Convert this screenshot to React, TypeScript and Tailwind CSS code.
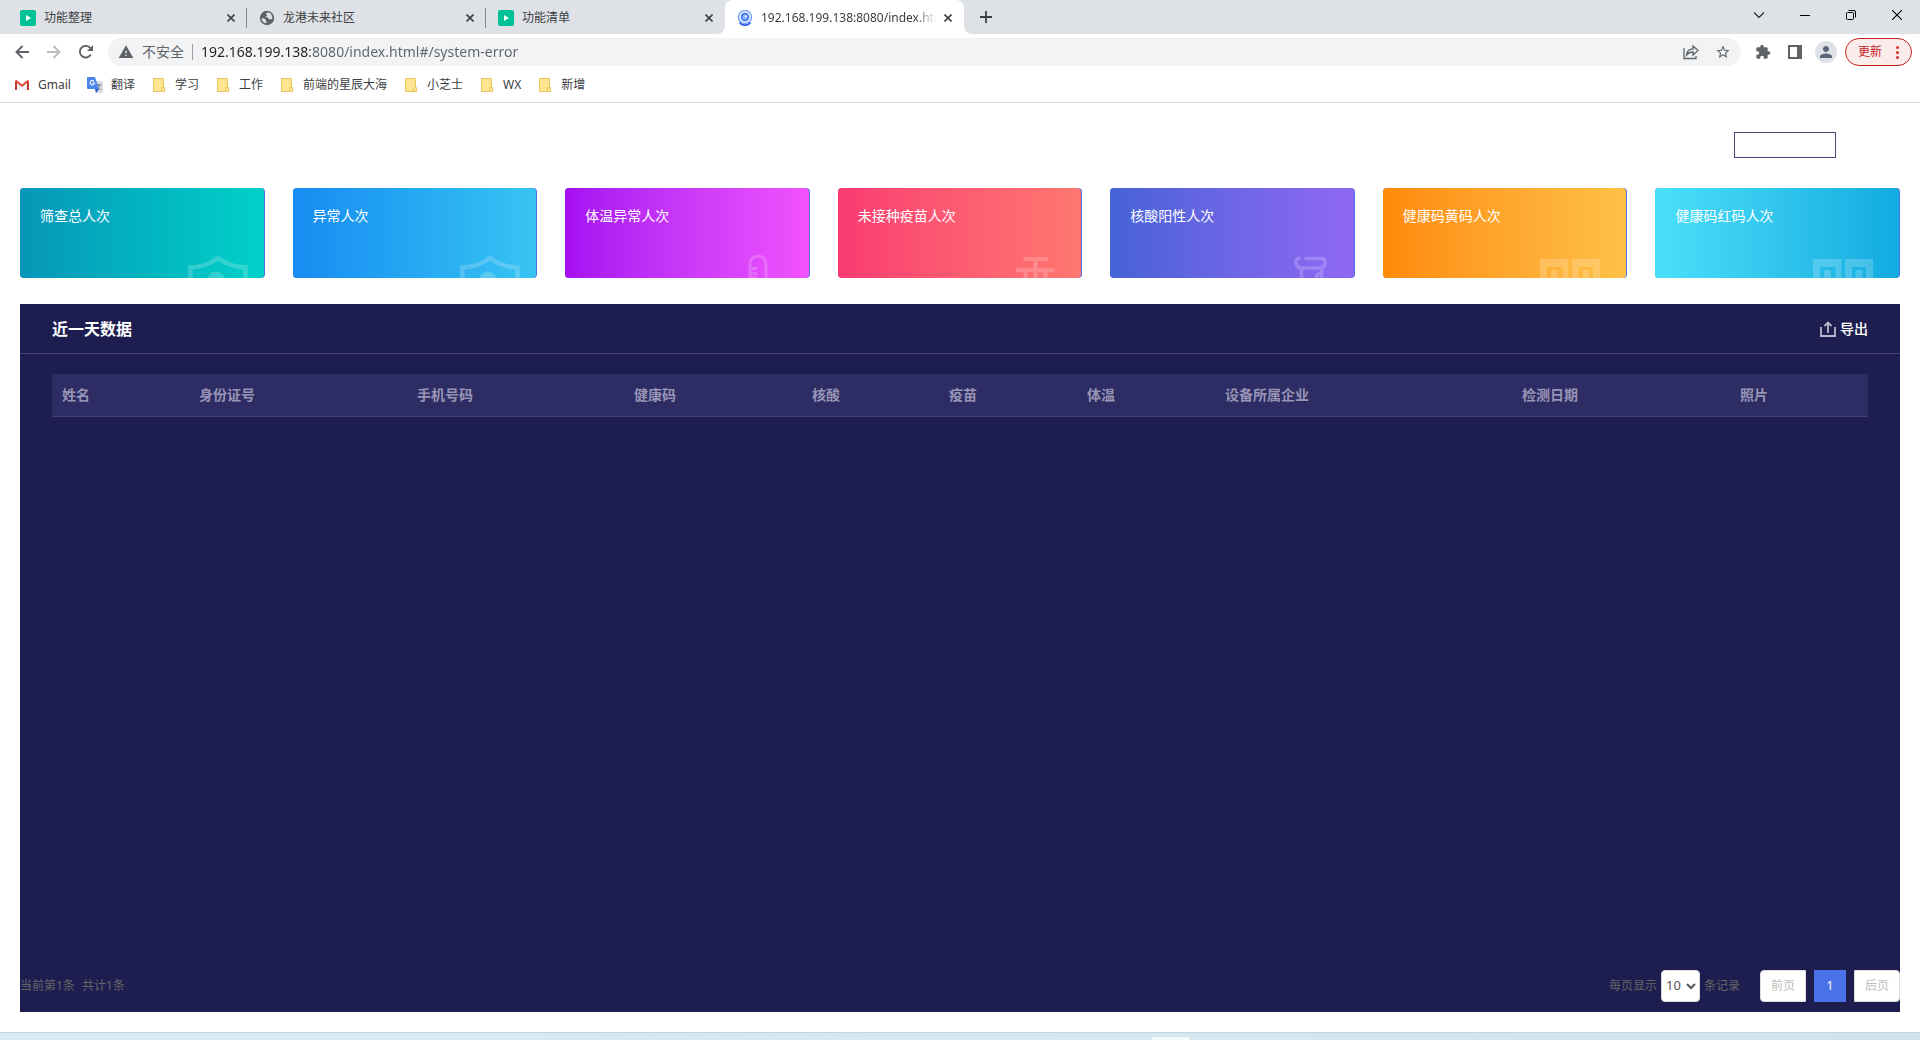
import React, { useState } from "react";
import { MdExtension, MdPerson, MdStarBorder, MdWarning } from "react-icons/md";

const tabs = [
  { title: "功能整理", icon: "play" },
  { title: "龙港未来社区", icon: "globe" },
  { title: "功能清单", icon: "play" },
  { title: "192.168.199.138:8080/index.html", icon: "camera" },
];

const folders = ["学习", "工作", "前端的星辰大海", "小芝士", "WX", "新增"];

const cards = [
  { label: "筛查总人次", color: "from-[#0896b8] to-[#02d1c8]", icon: "shield" },
  { label: "异常人次", color: "from-[#188bf2] to-[#38c4f2]", icon: "shield" },
  { label: "体温异常人次", color: "from-[#a50cf2] to-[#f252fd]", icon: "thermometer" },
  { label: "未接种疫苗人次", color: "from-[#f93a72] to-[#ff7770]", icon: "syringe" },
  { label: "核酸阳性人次", color: "from-[#4562d6] to-[#9068f4]", icon: "tube" },
  { label: "健康码黄码人次", color: "from-[#ff8a06] to-[#fec146]", icon: "code" },
  { label: "健康码红码人次", color: "from-[#4ae0fa] to-[#10abe0]", icon: "code" },
];

const columns = [
  { name: "姓名", width: "w-[137px]" },
  { name: "身份证号", width: "w-[218px]" },
  { name: "手机号码", width: "w-[217px]" },
  { name: "健康码", width: "w-[178px]" },
  { name: "核酸", width: "w-[137px]" },
  { name: "疫苗", width: "w-[138px]" },
  { name: "体温", width: "w-[138px]" },
  { name: "设备所属企业", width: "w-[297px]" },
  { name: "检测日期", width: "w-[218px]" },
  { name: "照片", width: "w-[138px]" },
];

const TabIcon = ({ name }: { name: string }) => {
  if (name === "play") {
    return (
      <svg className="h-4 w-4 shrink-0" viewBox="0 0 16 16">
        <rect width="16" height="16" rx="2" fill="#00c296" />
        <path d="M6 5l5 3-5 3z" fill="#fff" />
      </svg>
    );
  }
  if (name === "globe") {
    return (
      <svg className="h-4 w-4 shrink-0" viewBox="0 0 16 16">
        <circle cx="8" cy="8" r="7.2" fill="#5f6368" />
        <path
          d="M2.6 8.2c1.6 0 3 .2 3.8 1.1.7.8-.2 1.5.8 2 .8.4.4 1.4 0 2C4.6 13 2.6 11 2.6 8.2zM9 2.3c-.4.8-1.8.7-2 1.7-.1.9 1.2.6 1.1 1.5-.1.8-1.7.6-1.6 1.5.1.8 1.9.3 2.7.9.8.5.6 1.4 1.5 1.5.9.1 1.5-.4 2.6-.6C13.6 5.6 12 3 9 2.3z"
          fill="#dee1e6"
        />
      </svg>
    );
  }
  return (
    <svg className="h-4 w-4 shrink-0" viewBox="0 0 16 16">
      <circle cx="8" cy="7" r="6.6" fill="#e4edff" stroke="#6b9bf8" strokeWidth="1.2" />
      <circle cx="8" cy="7" r="4.2" fill="#3d73ec" />
      <circle cx="8" cy="7" r="2.6" fill="#8eb4ff" />
      <circle cx="9" cy="6.2" r="1" fill="#fff" />
      <path d="M2.5 12.5c1.5 2 3.2 2.7 5.5 2.7s4-.7 5.5-2.7" fill="none" stroke="#2e63e6" strokeWidth="1.8" />
    </svg>
  );
};

const CloseIcon = () => (
  <svg className="h-2 w-2" viewBox="0 0 8 8" stroke="#3c4043" strokeWidth="1.6">
    <path d="M.5.5l7 7m0-7l-7 7" />
  </svg>
);

const CardIcon = ({ name }: { name: string }) => {
  const place = name === "code" ? "right-[26px]" : "right-4";
  return (
    <svg
      className={`absolute bottom-0 h-6 w-[60px] text-white/20 ${place}`}
      viewBox="0 0 60 24"
      fill="none"
      stroke="currentColor"
    >
      {name === "shield" && (
        <>
          <path d="M2.5 26V13.5C13 13 22 10 30 4c8 6 17 9 27.5 9.5V26" strokeWidth="4.6" />
          <circle cx="28" cy="26" r="8.5" fill="currentColor" stroke="none" />
        </>
      )}
      {name === "thermometer" && (
        <path d="M17 26V10a8 8 0 0 1 16 0v16M18 14.5h6M18 19.5h6M18 23.5h6" strokeWidth="3" />
      )}
      {name === "syringe" && (
        <path
          d="M20 5h21M12.5 16.3h35M30.5 7v7.3M20.5 18.3V26M30.5 18.3V26M40.5 18.3V26"
          strokeWidth="4"
          strokeLinecap="round"
        />
      )}
      {name === "tube" && (
        <path
          d="M21 4.500c-5 0-3.500 8.500 1 9.500h21c4.500-1 6-9.500 1-9.500H28M23.500 16V26M43.500 16V26M38.500 26v-4l2-2"
          strokeWidth="3.600"
          strokeLinecap="round"
        />
      )}
      {name === "code" && (
        <path
          d="M0 5h28.5v21h-6V13H7v13H0zM11 16h7v10h-7zM32 5h28v21h-7V13H39v13h-7zM42.5 16h7v10h-7z"
          fill="currentColor"
          stroke="none"
        />
      )}
    </svg>
  );
};

const TabStrip = () => (
  <div className="flex h-[34px] items-stretch justify-between bg-[#dee1e6]">
    <div className="flex pl-2">
      {tabs.map((tab, i) => {
        const active = i === tabs.length - 1;
        return (
          <div
            key={tab.title + i}
            className={`relative flex w-[239px] items-center pl-3 pr-2 pt-[2px] ${active ? "rounded-t-lg bg-white" : ""}`}
          >
            <TabIcon name={tab.icon} />
            <button
              className={`ml-2 mr-1 flex-1 overflow-hidden whitespace-nowrap text-left text-xs text-[#3c4043] ${
                active ? "[mask-image:linear-gradient(to_right,#000_88%,transparent)]" : ""
              }`}
            >
              {tab.title}
            </button>
            <button aria-label="关闭标签页" className="flex h-4 w-4 items-center justify-center">
              <CloseIcon />
            </button>
            {i < 2 && <span className="absolute right-0 top-2 h-5 w-px bg-[#85898e]" />}
            {active && (
              <>
                <svg className="absolute -left-2 bottom-0" width="8" height="8" viewBox="0 0 8 8" fill="#fff">
                  <path d="M8 0v8H0a8 8 0 0 0 8-8z" />
                </svg>
                <svg className="absolute -right-2 bottom-0" width="8" height="8" viewBox="0 0 8 8" fill="#fff">
                  <path d="M0 0v8h8a8 8 0 0 1-8-8z" />
                </svg>
              </>
            )}
          </div>
        );
      })}
      <button aria-label="新标签页" className="ml-4 flex items-center">
        <svg className="h-3 w-3" viewBox="0 0 12 12" stroke="#3c4043" strokeWidth="1.8">
          <path d="M6 0v12M0 6h12" />
        </svg>
      </button>
    </div>
    <div className="flex pb-1">
      <button aria-label="搜索标签页" className="flex w-[46px] items-center justify-center">
        <svg width="12" height="12" viewBox="0 0 12 12" fill="none" stroke="#202124" strokeWidth="1.1">
          <path d="M1 3.5l5 5 5-5" />
        </svg>
      </button>
      <button aria-label="最小化" className="flex w-[46px] items-center justify-center">
        <svg width="10" height="10" viewBox="0 0 10 10" stroke="#000">
          <path d="M0 5.5h10" />
        </svg>
      </button>
      <button aria-label="还原" className="flex w-[46px] items-center justify-center">
        <svg width="10" height="10" viewBox="0 0 10 10" fill="none" stroke="#000">
          <rect x=".5" y="2.5" width="7" height="7" rx="1" />
          <path d="M2.5.5H8A1.5 1.5 0 0 1 9.5 2v5.5" />
        </svg>
      </button>
      <button aria-label="关闭" className="flex w-[46px] items-center justify-center">
        <svg width="10" height="10" viewBox="0 0 10 10" stroke="#000" strokeWidth="1.1">
          <path d="M0 0l10 10m0-10L0 10" />
        </svg>
      </button>
    </div>
  </div>
);

const Toolbar = () => (
  <div className="flex h-9 items-center pl-3 pr-2">
    <div className="flex gap-3">
      <button aria-label="后退" className="flex h-5 w-5 items-center justify-center">
        <svg width="14" height="14" viewBox="0 0 14 14" fill="none" stroke="#5f6368" strokeWidth="1.9">
          <path d="M14 7H2M7.5 1L1.5 7l6 6" />
        </svg>
      </button>
      <button aria-label="前进" className="flex h-5 w-5 items-center justify-center">
        <svg width="14" height="14" viewBox="0 0 14 14" fill="none" stroke="#babcbe" strokeWidth="1.9">
          <path d="M0 7h12M6.5 1l6 6-6 6" />
        </svg>
      </button>
      <button aria-label="重新加载" className="flex h-5 w-5 items-center justify-center">
        <svg width="14" height="14" viewBox="0 0 14 14" fill="none" stroke="#5f6368" strokeWidth="1.9">
          <path d="M11.8 9.5A5.8 5.8 0 1 1 11.2 3L13 5" />
          <path d="M14 0v6H8z" fill="#5f6368" stroke="none" />
        </svg>
      </button>
    </div>
    <div className="ml-3 flex h-7 flex-1 items-center rounded-full bg-[#f1f3f4] px-[10px]">
      <MdWarning className="h-4 w-4 text-[#5f6368]" />
      <span className="ml-2 text-sm text-[#5f6368]">不安全</span>
      <span className="mx-2 h-4 w-px bg-[#9aa0a6]" />
      <input
        aria-label="地址"
        defaultValue="192.168.199.138:8080/index.html#/system-error"
        className="flex-1 bg-[linear-gradient(to_right,#202124_109px,#5f6368_109px)] bg-clip-text text-sm text-transparent outline-none"
      />
      <button aria-label="分享" className="mr-4">
        <svg width="16" height="16" viewBox="0 0 16 16" fill="none" stroke="#5f6368" strokeWidth="1.3">
          <path d="M1 4v10.500h12V12M3.500 11c.5-4 3-6 6.500-6V2l5 4.500-5 4.500V8c-3 0-5 1-6.500 3z" />
        </svg>
      </button>
      <button aria-label="收藏">
        <MdStarBorder className="h-4 w-4 text-[#5f6368]" />
      </button>
    </div>
    <button aria-label="扩展程序" className="ml-3 flex w-5 justify-center">
      <MdExtension className="h-4 w-4 text-[#5f6368]" />
    </button>
    <button aria-label="侧边栏" className="ml-3 flex w-5 justify-center">
      <svg width="14" height="14" viewBox="0 0 14 14">
        <path d="M0 0h14v14H0zM2 2v10h7V2z" fill="#5f6368" fillRule="evenodd" />
      </svg>
    </button>
    <button aria-label="用户" className="ml-[10px] flex h-[22px] w-[22px] items-center justify-center rounded-full bg-[#dee1e6]">
      <MdPerson className="h-[18px] w-[18px] text-[#5a6478]" />
    </button>
    <button className="ml-2 flex h-7 items-center gap-[14px] rounded-full border border-[#c5221f] bg-[#faeceb] px-3 text-xs text-[#c5221f]">
      更新
      <svg width="3" height="13" viewBox="0 0 3 13" fill="#d93025">
        <circle cx="1.5" cy="1.5" r="1.5" />
        <circle cx="1.5" cy="6.5" r="1.5" />
        <circle cx="1.5" cy="11.5" r="1.5" />
      </svg>
    </button>
  </div>
);

const Bookmarks = () => (
  <nav className="flex h-[33px] items-center gap-4 border-b border-[#dadce0] pb-[3px] pl-[14px] text-xs text-[#3c4043]">
    <a href="#gmail" className="flex items-center gap-2">
      <svg width="16" height="16" viewBox="0 0 16 16" fill="none">
        <path d="M2 4v9M14 4v9" stroke="#c5352b" strokeWidth="2" />
        <path d="M3 12.5h10V5L8 9 3 5z" fill="#f1f1f1" />
        <path d="M1.5 3.5L8 8.7l6.5-5.2" stroke="#e0463a" strokeWidth="2" />
      </svg>
      Gmail
    </a>
    <a href="#translate" className="flex items-center gap-2">
      <svg width="16" height="16" viewBox="0 0 16 16">
        <path d="M6 4h9a1 1 0 0 1 1 1v10a1 1 0 0 1-1 1H9z" fill="#dadce0" />
        <path d="M9 8h5M11.5 7v1M13 8c-.5 2-2 3.5-3.5 4.500M10 9.500c1 1.500 2 2.500 3.500 3" stroke="#6b7780" fill="none" />
        <path d="M1 0h7l4 12H1a1 1 0 0 1-1-1V1a1 1 0 0 1 1-1z" fill="#4a86ee" />
        <path d="M8 12h4l-3 4z" fill="#2558c4" />
        <path d="M7 4.3A2.2 2.2 0 1 0 7.5 6H5.3" fill="none" stroke="#fff" strokeWidth="1.1" />
      </svg>
      翻译
    </a>
    {folders.map((name) => (
      <a key={name} href="#folder" className="flex items-center gap-2">
        <svg width="16" height="16" viewBox="0 0 16 16">
          <path d="M2.5 1.5h10v8.500l1 .5v4h-11z" fill="#ffe591" stroke="#e8c658" />
          <path d="M10.5 14.5v-4h2" fill="none" stroke="#e8c658" />
        </svg>
        {name}
      </a>
    ))}
  </nav>
);

const Pager = () => {
  const [size, setSize] = useState("10");
  return (
    <div className="flex items-center justify-between pb-[10px] text-xs text-[#666]">
      <div className="flex gap-[7px]">
        <span>当前第1条</span>
        <span>共计1条</span>
      </div>
      <div className="flex items-center">
        <label htmlFor="page-size">每页显示</label>
        <span className="relative mx-1 flex items-center">
          <select
            id="page-size"
            value={size}
            onChange={(e) => setSize(e.target.value)}
            className="h-8 w-[39px] appearance-none rounded border border-[#ddd] bg-white pl-1 text-[13px] text-[#555]"
          >
            <option>10</option>
            <option>20</option>
            <option>50</option>
          </select>
          <svg
            className="pointer-events-none absolute right-1"
            width="10"
            height="10"
            viewBox="0 0 10 10"
            fill="none"
            stroke="#555"
            strokeWidth="2"
          >
            <path d="M1 3l4 4 4-4" />
          </svg>
        </span>
        <span>条记录</span>
        <div className="ml-5 flex gap-2">
          <button className="h-8 rounded-l border border-[#ddd] bg-white px-[10px] text-[#bbb]">前页</button>
          <button className="h-8 w-8 bg-[#4a72e8] text-white">1</button>
          <button className="h-8 rounded-r border border-[#ddd] bg-white px-[10px] text-[#bbb]">后页</button>
        </div>
      </div>
    </div>
  );
};

const App = () => {
  return (
    <div className="flex min-h-screen flex-col bg-white font-['Noto_Sans','Noto_Sans_CJK_SC',sans-serif]">
      <header>
        <TabStrip />
        <Toolbar />
        <Bookmarks />
      </header>

      <main className="flex flex-1 flex-col px-5 pb-5">
        <div className="flex justify-end pb-[30px] pr-16 pt-[29px]">
          <button aria-label="返回" className="h-[26px] w-[102px] border border-[#4b437b]" />
        </div>

        {/* Summary cards */}
        <div className="grid grid-cols-7 gap-7">
          {cards.map((card) => (
            <div key={card.label} className="rounded bg-[#4a74e6] pr-px">
              <div
                className={`relative h-[90px] overflow-hidden rounded bg-gradient-to-r px-5 pt-[18px] text-sm text-white ${card.color}`}
              >
                {card.label}
                <CardIcon name={card.icon} />
              </div>
            </div>
          ))}
        </div>

        {/* Data panel */}
        <section className="mt-[26px] flex flex-1 flex-col bg-[#1e1d50]">
          <div className="flex h-[50px] items-center justify-between border-b border-[#443f76] px-8">
            <h2 className="text-base font-bold text-white">近一天数据</h2>
            <button className="flex items-center gap-1 text-sm font-medium text-white">
              <svg width="16" height="16" viewBox="0 0 16 16" fill="none" stroke="#b9b8cc" strokeWidth="1.8">
                <path d="M1 6v9h14V6M8 12V1.5M4.5 5L8 1.500 11.500 5" />
              </svg>
              导出
            </button>
          </div>
          <div className="flex-1 px-8 pt-5">
            <table className="w-full table-fixed">
              <thead>
                <tr className="h-[42px] border-b border-[#443f76] bg-[#2e2c64] text-left text-sm text-[#9794b5]">
                  {columns.map((col) => (
                    <th key={col.name} className={`px-[10px] font-bold ${col.width}`}>
                      {col.name}
                    </th>
                  ))}
                </tr>
              </thead>
              <tbody />
            </table>
          </div>
          <Pager />
        </section>
      </main>

      {/* Top edge of the taskbar */}
      <footer className="flex h-2 items-end border-t border-[#c3d5e2] bg-gradient-to-r from-[#d6ebf4] via-[#d4e9f0] to-[#cfe5ec]">
        <div className="ml-[60%] h-[3px] w-[38px] rounded-t bg-[#f3f9fb]" />
      </footer>
    </div>
  );
};

export default App;
